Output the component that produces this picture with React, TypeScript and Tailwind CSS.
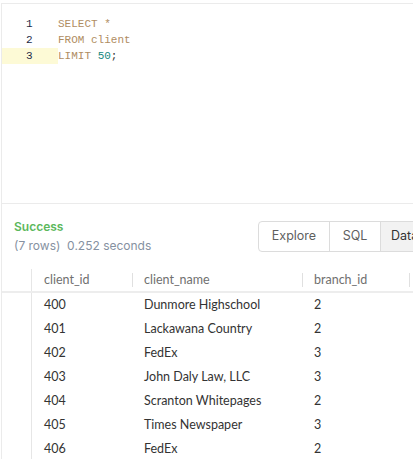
const rows = [
  { id: "400", name: "Dunmore Highschool", branch: "2" },
  { id: "401", name: "Lackawana Country", branch: "2" },
  { id: "402", name: "FedEx", branch: "3" },
  { id: "403", name: "John Daly Law, LLC", branch: "3" },
  { id: "404", name: "Scranton Whitepages", branch: "2" },
  { id: "405", name: "Times Newspaper", branch: "3" },
  { id: "406", name: "FedEx", branch: "2" },
];

function Editor() {
  const kw = "text-[#b08d62]";
  const lines = [
    <><span className={kw}>SELECT</span> <span className="text-[#b08d62]">*</span></>,
    <><span className={kw}>FROM</span> <span className="text-[#b08d62]">client</span></>,
    <><span className={kw}>LIMIT</span> <span className="text-[#16897f]">50</span><span className="text-[#333]">;</span></>,
  ];
  return (
    <div className="h-[201px] border-y border-[#ebebeb] pt-3 font-['Liberation_Mono',monospace] text-[11px] leading-4">
      {lines.map((l, i) => (
        <div key={i} className="flex h-4">
          <div className={`w-[56px] pl-[24px] text-[#1d2a48] ${i === 2 ? "bg-[#fdfad6]" : ""}`}>{i + 1}</div>
          <div className="whitespace-pre">{l}</div>
        </div>
      ))}
    </div>
  );
}

export default function App() {
  return (
    <div className="w-[413px] h-[459px] overflow-hidden bg-white">
      <div className="mt-[3px] ml-px border-l border-[#ebebeb] h-[456px]">
        <Editor />
        <div className="flex items-start justify-between pl-[12px] pt-[13px] font-['Inter',sans-serif] text-[12px]">
          <div className="leading-[19px]">
            <div className="font-semibold text-[#5cb85c]">Success</div>
            <div className="text-[#8691a1]">(7 rows)&nbsp; 0.252 seconds</div>
          </div>
          <div className="mt-[4px] -mr-[41px] flex h-[31px] rounded border border-[#dcdcdc] text-[#5f5f5f] text-[12.5px] overflow-hidden">
            <div className="w-[71px] flex items-center justify-center border-r border-[#dcdcdc]">Explore</div>
            <div className="w-[51px] flex items-center justify-center border-r border-[#dcdcdc]">SQL</div>
            <div className="w-[72px] flex items-center pl-[10px] bg-[#f2f2f2] text-[#333]">Data</div>
          </div>
        </div>
        <div className="mt-[14px] font-['Lato',sans-serif] text-[12.5px]">
          <div className="flex h-[24px] items-center border-b-2 border-[#ededed] text-[#707070]">
            <div className="w-[29px] h-full" />
            <div className="w-[101px] h-full flex items-center pl-[12px] border-l border-[#e6e6e6]">client_id</div>
            <div className="w-[170px] flex items-center pl-[11px] border-l border-[#e0e0e0] h-[14px]">client_name</div>
            <div className="w-[107px] flex items-center pl-[11px] border-l border-[#e0e0e0] h-[14px]">branch_id</div>
            <div className="border-l border-[#e0e0e0] h-[14px]" />
          </div>
          {rows.map((r) => (
            <div key={r.id} className="flex h-6 items-center text-[#333]">
              <div className="w-[29px] h-full" />
              <div className="w-[101px] h-full flex items-center pl-[12px] border-l border-[#e6e6e6]">{r.id}</div>
              <div className="w-[170px] pl-[12px]">{r.name}</div>
              <div className="w-[107px] pl-[12px]">{r.branch}</div>
            </div>
          ))}
        </div>
      </div>
    </div>
  );
}
